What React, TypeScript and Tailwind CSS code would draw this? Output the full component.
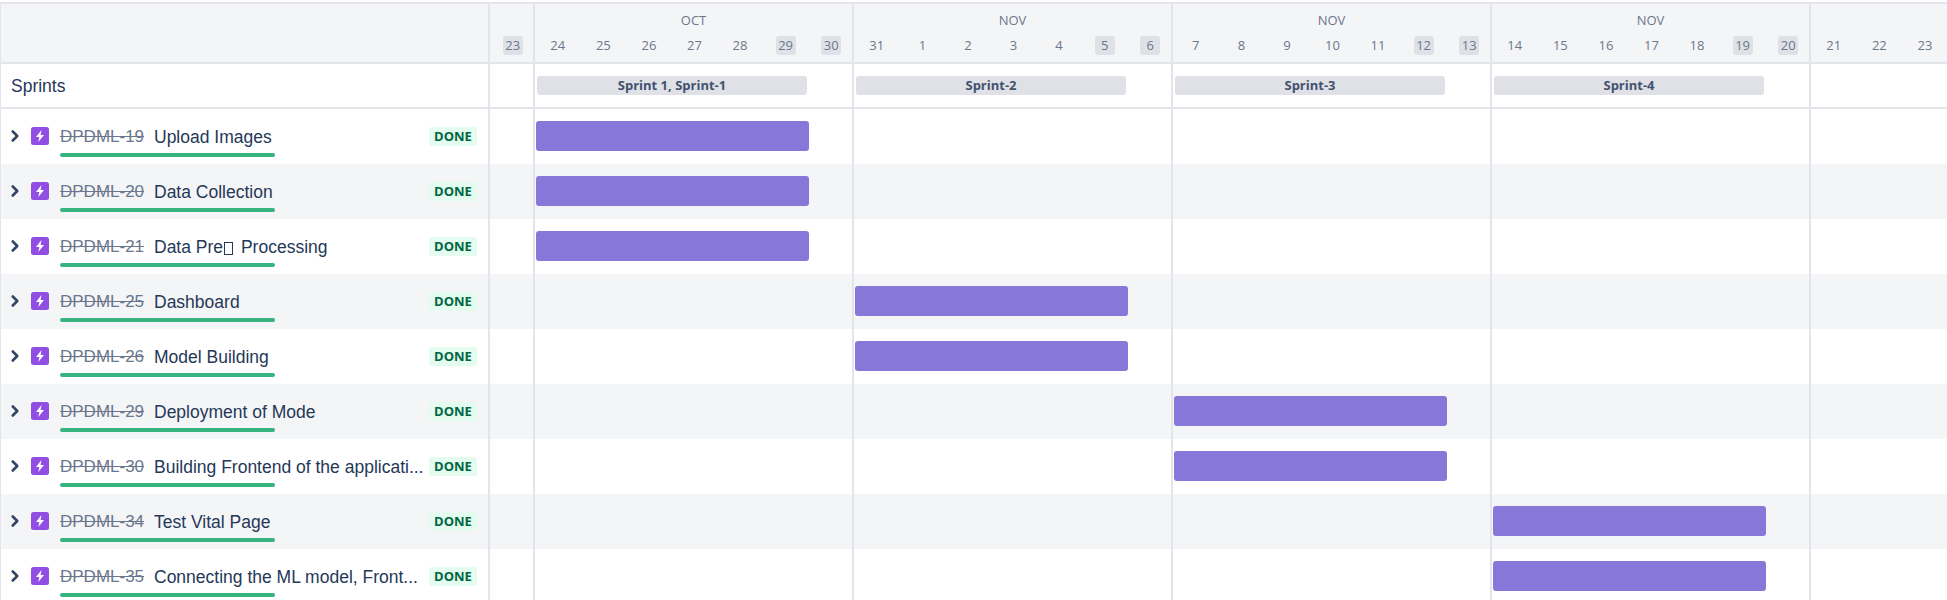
import type { ReactNode } from "react";
import { ChevronRight } from "lucide-react";

const font = "[font-family:'Open_Sans','Noto_Sans',sans-serif]";
const rowFont = "[font-family:'Liberation_Sans',Arial,sans-serif]";

const groups = [
  { month: "", width: "w-[45px]", days: [23] },
  { month: "OCT", width: "w-[319px]", days: [24, 25, 26, 27, 28, 29, 30] },
  { month: "NOV", width: "w-[319px]", days: [31, 1, 2, 3, 4, 5, 6] },
  { month: "NOV", width: "w-[319px]", days: [7, 8, 9, 10, 11, 12, 13] },
  { month: "NOV", width: "w-[319px]", days: [14, 15, 16, 17, 18, 19, 20] },
  { month: "", width: "flex-1", days: [21, 22, 23] },
];

const weekend = [23, 29, 30, 5, 6, 12, 13, 19, 20];

const sprints = ["Sprint 1, Sprint-1", "Sprint-2", "Sprint-3", "Sprint-4"];

const issues: { id: string; title: ReactNode; sprint: number }[] = [
  { id: "DPDML-19", title: "Upload Images", sprint: 0 },
  { id: "DPDML-20", title: "Data Collection", sprint: 0 },
  {
    id: "DPDML-21",
    title: (
      <>
        Data Pre
        {/* missing glyph box in the issue title */}
        <span className="inline-block w-[9px] h-[13px] ml-[1px] mr-[3px] border border-[#253858] align-[-2px]" />{" "}
        Processing
      </>
    ),
    sprint: 0,
  },
  { id: "DPDML-25", title: "Dashboard", sprint: 1 },
  { id: "DPDML-26", title: "Model Building", sprint: 1 },
  { id: "DPDML-29", title: "Deployment of Mode", sprint: 2 },
  { id: "DPDML-30", title: "Building Frontend of the applicati...", sprint: 2 },
  { id: "DPDML-34", title: "Test Vital Page", sprint: 3 },
  { id: "DPDML-35", title: "Connecting the ML model, Front...", sprint: 3 },
];

function DayCell({ day, last }: { day: number; last: boolean }) {
  // the trailing 23 is a weekday, only the first one is shaded
  const shaded = weekend.includes(day) && !last;
  return (
    <div className="w-[45.57px] shrink-0 flex justify-center">
      <span className={`w-5 h-[19px] rounded-[3px] flex items-center justify-center text-[13px] text-[#6B778C] ${shaded ? "bg-[#DFE1E6]" : ""}`}>
        {day}
      </span>
    </div>
  );
}

function TimelineCells({ sprint, kind }: { sprint?: number; kind: "sprint" | "bar" }) {
  return (
    <div className="flex-1 flex min-w-0">
      {groups.map((g, i) => (
        <div key={i} className={`${g.width} ${i < 5 ? "shrink-0 border-r-2 border-[#E4E5EA]" : ""} flex items-center`}>
          {kind === "sprint" && i >= 1 && i <= 4 && (
            <div className="ml-[2px] w-[270px] h-[19px] rounded-[3px] bg-[#DFE1E6] flex items-center justify-center text-[13px] font-bold text-[#42526E]">
              {sprints[i - 1]}
            </div>
          )}
          {kind === "bar" && sprint === i - 1 && (
            <div className="ml-[1px] -mt-[1px] w-[273px] h-[30px] rounded-[3px] bg-[#8777D9]" />
          )}
        </div>
      ))}
    </div>
  );
}

function IssueRow({ id, title, sprint, odd }: { id: string; title: ReactNode; sprint: number; odd: boolean }) {
  return (
    <div className={`h-[55px] flex shrink-0 ${odd ? "bg-[#F4F5F7]" : "bg-white"}`}>
      <div className="w-[489px] shrink-0 border-r-2 border-[#E4E5EA] flex items-start pl-[11px] pr-[11px] pt-[18px]">
        <ChevronRight className="w-[18px] h-[18px] -ml-[6px] text-[#344563] shrink-0" strokeWidth={3.5} />
        <svg viewBox="0 0 18 18" className="w-[18px] h-[18px] ml-[7px] shrink-0">
          <rect width="18" height="18" rx="2.5" fill="#904EE2" />
          <path d="M10.5 3 5 10h3.3l-1 5L13 8H9.6z" fill="#fff" />
        </svg>
        <div className={`ml-[11px] w-[215px] shrink-0 ${rowFont}`}>
          <div className="flex items-center h-[18px] pt-[2px] whitespace-nowrap">
            <span className="text-[17px] text-[#6B778C] line-through w-[94px] shrink-0">{id}</span>
            <span className="text-[17.5px] text-[#253858]">{title}</span>
          </div>
          <div className="mt-[8px] h-1 rounded-sm bg-[#36B37E]" />
        </div>
        <span className="ml-auto h-[19px] w-[48px] rounded-[3px] bg-[#E3FCEF] text-[#006644] text-[13px] font-bold flex items-center justify-center shrink-0">
          DONE
        </span>
      </div>
      <TimelineCells kind="bar" sprint={sprint} />
    </div>
  );
}

export default function App() {
  return (
    <div className={`h-[600px] overflow-hidden pt-[2px] bg-white ${font}`}>
      <div className="border-l border-t-2 border-[#E4E5EA] flex flex-col">
        {/* Header */}
        <div className="h-[60px] flex bg-[#F4F5F7] border-b-2 border-[#E4E5EA] shrink-0">
          <div className="w-[489px] shrink-0 border-r-2 border-[#E4E5EA]" />
          <div className="flex-1 flex min-w-0">
            {groups.map((g, i) => (
              <div key={i} className={`${g.width} ${i < 5 ? "shrink-0 border-r-2 border-[#E4E5EA]" : ""} flex flex-col items-center`}>
                <div className="h-[32px] pt-[7px] text-[13px] leading-[18px] text-[#6B778C]">{g.month}</div>
                <div className="flex self-start">
                  {g.days.map((d, j) => (
                    <DayCell key={j} day={d} last={i === 5} />
                  ))}
                </div>
              </div>
            ))}
          </div>
        </div>

        {/* Sprints row */}
        <div className="h-[45px] flex border-b-2 border-[#E4E5EA] shrink-0">
          <div className={`w-[489px] shrink-0 border-r-2 border-[#E4E5EA] flex items-center pl-[10px] pt-[2px] text-[17.5px] text-[#253858] ${rowFont}`}>
            Sprints
          </div>
          <TimelineCells kind="sprint" />
        </div>

        {issues.map((issue, i) => (
          <IssueRow key={issue.id} {...issue} odd={i % 2 === 1} />
        ))}
      </div>
    </div>
  );
}
